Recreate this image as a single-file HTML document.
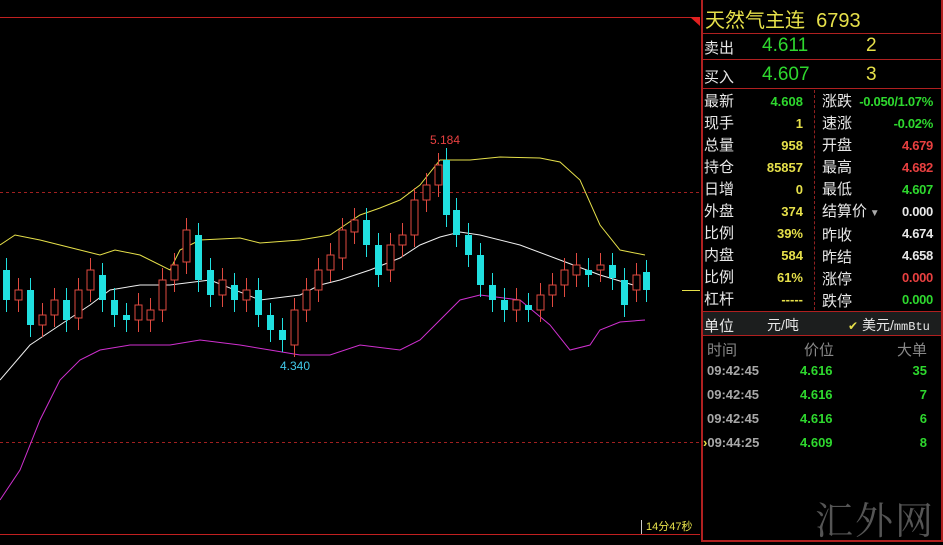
<!DOCTYPE html>
<html><head><meta charset="utf-8"><style>
*{margin:0;padding:0;box-sizing:border-box}
body{width:943px;height:543px;background:#000;overflow:hidden;position:relative;font-family:"Liberation Sans","Noto Sans CJK SC",sans-serif}
.a{position:absolute;white-space:nowrap}
.l{font-size:15px;color:#e8e8e8}
.v{font-size:13px;font-weight:bold;text-align:right}
.y{color:#e6e04a}.g{color:#2ed82e}.r{color:#e84040}.w{color:#e8e8e8}.gr{color:#a8a8a8}
</style></head><body>
<svg class="a" style="left:0;top:0" width="702" height="543">
<line x1="0" y1="17.5" x2="696" y2="17.5" stroke="#c02020"/>
<polygon points="690,17 700,17 700,26" fill="#e02020"/>
<line x1="0" y1="192.5" x2="700" y2="192.5" stroke="#a02020" stroke-dasharray="3,3"/>
<line x1="0" y1="442.5" x2="700" y2="442.5" stroke="#a02020" stroke-dasharray="3,3"/>
<line x1="0" y1="534.5" x2="700" y2="534.5" stroke="#c02020"/>
<line x1="641.5" y1="520" x2="641.5" y2="534" stroke="#ccc"/>
<line x1="682" y1="290.5" x2="700" y2="290.5" stroke="#e6e04a"/>
<polyline fill="none" stroke="#e6e04a" points="0,245 15,235 40,240 60,245 80,250 100,255 115,250 140,255 170,270 180,250 200,240 240,238 260,243 300,240 330,235 345,225 360,215 380,208 400,200 420,185 440,160 470,160 500,157 540,158 560,162 580,180 600,225 620,250 645,255"/>
<polyline fill="none" stroke="#f0f0f0" points="0,380 30,345 60,325 90,305 110,290 140,285 170,285 210,280 260,300 300,295 320,285 340,280 370,270 400,258 420,245 440,237 460,232 480,235 520,245 560,260 600,275 640,287"/>
<polyline fill="none" stroke="#d030d0" points="0,500 20,470 40,420 60,380 80,360 100,350 130,345 170,345 200,340 240,345 270,350 300,355 330,355 360,345 400,350 420,340 440,320 460,300 480,295 520,300 550,325 570,350 590,345 600,330 620,322 645,320"/>
<g id="c"></g>
<text x="430" y="144" fill="#e84040" font-size="12" font-family="Liberation Sans">5.184</text>
<text x="280" y="370" fill="#40c8e8" font-size="12" font-family="Liberation Sans">4.340</text>
<text x="646" y="530" fill="#e6e04a" font-size="11" font-family="Liberation Sans,Noto Sans CJK SC">14分47秒</text>
</svg>
<script>
var d=[[6,270,300],[18,300,290],[30,290,325],[42,325,315],[54,315,300],[66,300,320],[78,318,290],[90,290,270],[102,275,300],[114,300,315],[126,315,320],[138,320,305],[150,320,310],[162,310,280],[174,280,265],[186,262,230],[198,235,280],[210,270,295],[222,295,280],[234,285,300],[246,300,290],[258,290,315],[270,315,330],[282,330,340],[294,345,310],[306,310,290],[318,290,270],[330,270,255],[342,258,230],[354,232,220],[366,220,245],[378,245,275],[390,270,245],[402,245,235],[414,235,200],[426,200,185],[438,185,165],[446,160,215],[456,210,235],[468,235,255],[480,255,285],[492,285,300],[504,300,310],[516,310,300],[528,305,310],[540,310,295],[552,295,285],[564,285,270],[576,275,265],[588,270,275],[600,270,265],[612,265,278],[624,280,305],[636,290,275],[646,272,290]];
var s='';d.forEach(function(c){var x=c[0],o=c[1],cl=c[2],t=Math.min(o,cl),b=Math.max(o,cl);var up=cl<o;var col=up?'#e04a40':'#20e0e0';
s+='<line x1="'+(x+.5)+'" y1="'+(t-12)+'" x2="'+(x+.5)+'" y2="'+(b+12)+'" stroke="'+col+'"/>';
s+='<rect x="'+(x-3)+'" y="'+t+'" width="7" height="'+Math.max(b-t,2)+'" '+(up?'fill="#000" stroke="'+col+'"':'fill="'+col+'"')+'/>';});
document.getElementById('c').innerHTML=s;
</script>
<div class="a" style="left:701px;top:0;width:242px;height:542px;border:2px solid #b02020;border-top:none"></div>
<div class="a" style="left:702px;top:33px;width:240px;border-top:1px solid #b02020"></div>
<div class="a" style="left:702px;top:59px;width:240px;border-top:1px solid #b02020"></div>
<div class="a" style="left:702px;top:88px;width:240px;border-top:1px solid #b02020"></div>
<div class="a" style="left:814px;top:90px;height:220px;border-left:1px dashed #902020"></div>
<div class="a" style="left:703px;top:311px;width:238px;height:25px;background:#1c1e1e;border-top:1px solid #b02020;border-bottom:1px solid #b02020"></div>
<div class="a y" style="left:705px;top:4px;font-size:20px">天然气主连&nbsp;&nbsp;6793</div>
<div class="a l" style="left:704px;top:37px">卖出</div><div class="a g" style="left:762px;top:35px;font-size:19px">4.611</div><div class="a y" style="left:866px;top:35px;font-size:19px">2</div>
<div class="a l" style="left:704px;top:66px">买入</div><div class="a g" style="left:762px;top:64px;font-size:19px">4.607</div><div class="a y" style="left:866px;top:64px;font-size:19px">3</div>
<div class="a" style="left:704px;top:91px;line-height:22px">
<div class="l">最新</div><div class="l">现手</div><div class="l">总量</div><div class="l">持仓</div><div class="l">日增</div><div class="l">外盘</div><div class="l">比例</div><div class="l">内盘</div><div class="l">比例</div><div class="l">杠杆</div></div>
<div class="a v" style="left:740px;width:63px;top:91px;line-height:22px">
<div class="g">4.608</div><div class="y">1</div><div class="y">958</div><div class="y">85857</div><div class="y">0</div><div class="y">374</div><div class="y">39%</div><div class="y">584</div><div class="y">61%</div><div class="y">-----</div></div>
<div class="a" style="left:822px;top:91px;line-height:22px">
<div class="l">涨跌</div><div class="l">速涨</div><div class="l">开盘</div><div class="l">最高</div><div class="l">最低</div><div class="l">结算价<span style="color:#aaa;font-size:10px"> ▼</span></div><div class="l">昨收</div><div class="l">昨结</div><div class="l">涨停</div><div class="l">跌停</div></div>
<div class="a v" style="left:850px;width:83px;top:91px;line-height:22px;letter-spacing:-0.3px">
<div class="g">-0.050/1.07%</div><div class="g">-0.02%</div><div class="r">4.679</div><div class="r">4.682</div><div class="g">4.607</div><div class="w">0.000</div><div class="w">4.674</div><div class="w">4.658</div><div class="r">0.000</div><div class="g">0.000</div></div>
<div class="a l" style="left:704px;top:315px">单位</div>
<div class="a l" style="left:767px;top:315px;font-size:14px">元/吨</div>
<div class="a l" style="left:848px;top:315px;font-size:14px"><span class="y" style="font-size:12px">✔</span> 美元/<span style="font-family:'Liberation Mono';font-size:12px">mmBtu</span></div>
<div class="a" style="left:707px;top:339px;color:#888;font-size:15px">时间</div>
<div class="a" style="left:804px;top:339px;color:#888;font-size:15px">价位</div>
<div class="a" style="left:897px;top:339px;color:#888;font-size:15px">大单</div>
<div class="a" style="left:707px;top:359px;line-height:24px;font-size:13px;font-weight:bold" >
<div class="gr">09:42:45</div><div class="gr">09:42:45</div><div class="gr">09:42:45</div><div class="gr"><span class="y" style="margin-left:-4px">›</span>09:44:25</div></div>
<div class="a g" style="left:800px;top:359px;line-height:24px;font-size:13px;font-weight:bold"><div>4.616</div><div>4.616</div><div>4.616</div><div>4.609</div></div>
<div class="a g" style="left:890px;width:37px;text-align:right;top:359px;line-height:24px;font-size:13px;font-weight:bold"><div>35</div><div>7</div><div>6</div><div>8</div></div>
<div class="a" style="left:815px;top:490px;color:#555;font-size:38px;font-family:'Noto Serif CJK SC',serif;letter-spacing:2px">汇外网</div>
</body></html>
